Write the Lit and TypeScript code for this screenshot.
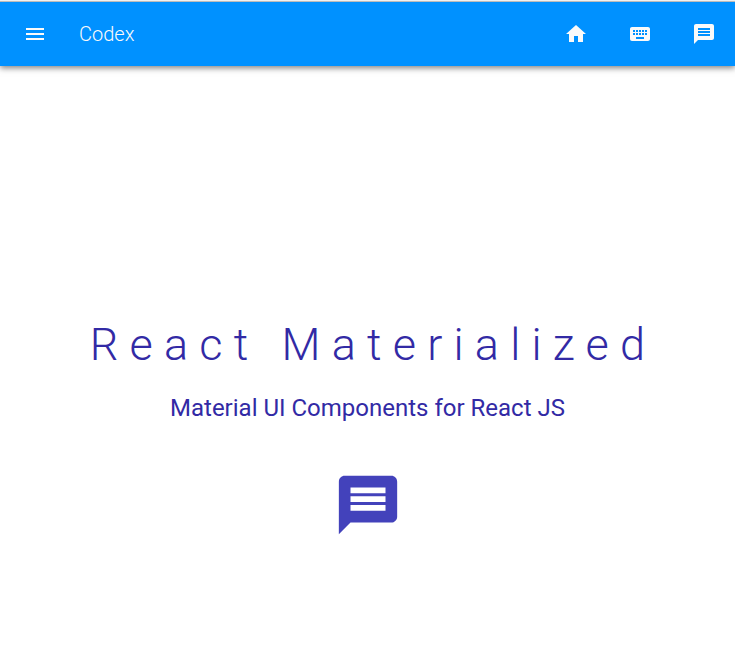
import { LitElement, html, css, svg } from "lit";
import { customElement } from "lit/decorators.js";

const icon = (name: string, d: string) =>
  html`<svg class=${name} viewBox="0 0 24 24" aria-hidden="true">${svg`<path d=${d} />`}</svg>`;

const MENU = "M3 18h18v-2H3v2zm0-5h18v-2H3v2zm0-7v2h18V6H3z";
const HOME = "M10 20v-6h4v6h5v-8h3L12 3 2 12h3v8z";
const KEYBOARD =
  "M20 5H4c-1.1 0-1.99.9-1.99 2L2 17c0 1.1.9 2 2 2h16c1.1 0 2-.9 2-2V7c0-1.1-.9-2-2-2zm-9 3h2v2h-2V8zm0 3h2v2h-2v-2zM8 8h2v2H8V8zm0 3h2v2H8v-2zm-1 2H5v-2h2v2zm0-3H5V8h2v2zm9 7H8v-2h8v2zm0-4h-2v-2h2v2zm0-3h-2V8h2v2zm3 3h-2v-2h2v2zm0-3h-2V8h2v2z";
const MESSAGE =
  "M20 2H4c-1.1 0-1.99.9-1.99 2L2 22l4-4h14c1.1 0 2-.9 2-2V4c0-1.1-.9-2-2-2zm-2 12H6v-2h12v2zm0-3H6V9h12v2zm0-3H6V6h12v2z";

@customElement("app-root")
export class AppRoot extends LitElement {
  static styles = css`
    :host {
      display: flex;
      flex-direction: column;
      height: 100vh;
      box-sizing: border-box;
      border-top: 1px solid #f0f0f0;
      background: #fff;
      font-family: Roboto, sans-serif;
      overflow: hidden;
    }
    header {
      box-sizing: border-box;
      display: flex;
      align-items: center;
      height: 65px;
      flex: none;
      padding: 0 19px 0 23px;
      border-top: 1px solid #bcbcbc;
      background: #0091ff;
      color: #fafafa;
      box-shadow: 0 2px 6px rgba(0, 0, 0, 0.5);
    }
    svg { display: block; fill: currentColor; }
    .glyph { width: 24px; height: 24px; }
    .brand {
      margin: 0 auto 0 32px;
      font-size: 20px;
      font-weight: 300;
      line-height: 24px;
    }
    nav { display: flex; gap: 40px; }
    main {
      display: flex;
      flex-direction: column;
      align-items: center;
      padding-top: 249px;
      color: #322aa5;
    }
    h1 {
      margin: 0;
      padding-left: 11px;
      font-size: 45px;
      line-height: 60px;
      font-weight: 300;
      letter-spacing: 11.2px;
      white-space: nowrap;
    }
    h2 {
      margin: 17px 0 0;
      font-size: 24px;
      line-height: 32px;
      font-weight: 400;
      white-space: nowrap;
    }
    .large { width: 70px; height: 70px; margin-top: 46px; color: #4342bb; }
  `;

  render() {
    return html`
      <header>
        ${icon("glyph", MENU)}
        <span class="brand">Codex</span>
        <nav>${[HOME, KEYBOARD, MESSAGE].map((d) => icon("glyph", d))}</nav>
      </header>
      <main>
        <h1>React Materialized</h1>
        <h2>Material UI Components for React JS</h2>
        ${icon("large", MESSAGE)}
      </main>
    `;
  }
}
